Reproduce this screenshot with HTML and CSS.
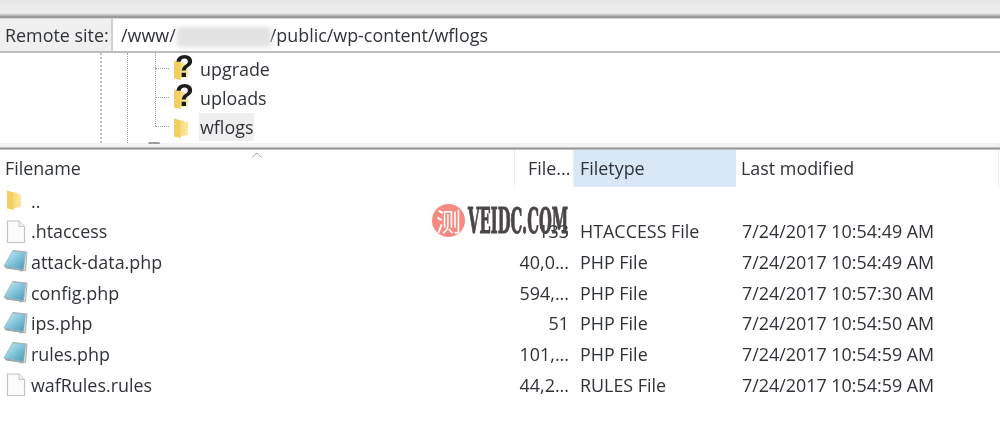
FILE: index.html
```html
<!DOCTYPE html>
<html lang="en">
<head>
<meta charset="utf-8">
<title>Remote site</title>
<link rel="stylesheet" href="styles.css">
</head>
<body>
<svg class="defs" width="0" height="0" aria-hidden="true">
  <defs>
    <linearGradient id="fold" x1="0" y1="0" x2="1" y2="0"><stop offset="0" stop-color="#f7d877"/><stop offset="1" stop-color="#fdea9f"/></linearGradient>
    <linearGradient id="php" x1="0" y1="0" x2="1" y2="1"><stop offset="0" stop-color="#d8eef4"/><stop offset=".5" stop-color="#84c6da"/><stop offset="1" stop-color="#4396b4"/></linearGradient>
    <symbol id="folder" viewBox="0 0 16 22">
      <path d="M1 1.5 8 3.5V21L1 19.5Z" fill="#f3cf63"/>
      <path d="M7 3.5H11V5H15V18L8 19V21L7 20.5Z" fill="url(#fold)"/>
    </symbol>
    <symbol id="file" viewBox="0 0 20 24">
      <path d="M1.5 1H13L18.5 6.5V22.5H1.5Z" fill="#fbfbfb" stroke="#c2c2c2" stroke-width="1.2"/>
      <path d="M13 1V6.5H18.5" fill="#eeeeee" stroke="#c8c8c8" stroke-width="1"/>
    </symbol>
    <symbol id="phpfile" viewBox="0 0 26 24">
      <path d="M10 1.5 24 3 22.5 21.5 17 22Z" fill="#e2e2e2" stroke="#b0b0b0" stroke-width="1"/>
      <path d="M9.5 2 22.5 3.5 20.5 20.5 1 17Z" fill="url(#php)" stroke="#86b2c2" stroke-width=".7"/>
      <path d="M1 17 20.5 20.5 20.3 22 3 19.5Z" fill="#98a8af"/>
    </symbol>
  </defs>
</svg>

<div class="window">
  <div class="topband"></div>

  <div class="address">
    <label class="address-label">Remote site:</label>
    <div class="address-input">/www/<span class="redacted"></span>/public/wp-content/wflogs</div>
  </div>

  <div class="tree">
    <i class="guide guide-a"></i>
    <i class="guide guide-b"></i>
    <i class="guide guide-c"></i>
    <div class="tree-row">
      <i class="branch"></i>
      <span class="tree-icon"><svg class="icon-folder"><use href="#folder"/></svg><b class="unknown">?</b></span>
      <span class="tree-name">upgrade</span>
    </div>
    <div class="tree-row">
      <i class="branch"></i>
      <span class="tree-icon"><svg class="icon-folder"><use href="#folder"/></svg><b class="unknown">?</b></span>
      <span class="tree-name">uploads</span>
    </div>
    <div class="tree-row">
      <i class="branch"></i>
      <span class="tree-icon"><svg class="icon-folder"><use href="#folder"/></svg></span>
      <span class="tree-name selected">wflogs</span>
    </div>
    <i class="next-stub"></i>
  </div>

  <div class="splitter"></div>

  <div class="list">
    <div class="row header">
      <div class="cell name">Filename<svg class="sort" width="12" height="6" viewBox="0 0 12 6"><path d="M1 5.5 6 1l5 4.5" fill="none" stroke="#a8a8a8"/></svg></div>
      <div class="cell size">File...</div>
      <div class="cell type hot">Filetype</div>
      <div class="cell date">Last modified</div>
    </div>
    <div class="row">
      <div class="cell name"><svg class="icon-list-folder"><use href="#folder"/></svg><span class="label">..</span></div>
      <div class="cell size"></div><div class="cell type"></div><div class="cell date"></div>
    </div>
    <div class="row">
      <div class="cell name"><svg class="icon-file"><use href="#file"/></svg><span class="label">.htaccess</span></div>
      <div class="cell size">133</div><div class="cell type">HTACCESS File</div><div class="cell date">7/24/2017 10:54:49 AM</div>
    </div>
    <div class="row">
      <div class="cell name"><svg class="icon-php"><use href="#phpfile"/></svg><span class="label">attack-data.php</span></div>
      <div class="cell size">40,0...</div><div class="cell type">PHP File</div><div class="cell date">7/24/2017 10:54:49 AM</div>
    </div>
    <div class="row">
      <div class="cell name"><svg class="icon-php"><use href="#phpfile"/></svg><span class="label">config.php</span></div>
      <div class="cell size">594,...</div><div class="cell type">PHP File</div><div class="cell date">7/24/2017 10:57:30 AM</div>
    </div>
    <div class="row">
      <div class="cell name"><svg class="icon-php"><use href="#phpfile"/></svg><span class="label">ips.php</span></div>
      <div class="cell size">51</div><div class="cell type">PHP File</div><div class="cell date">7/24/2017 10:54:50 AM</div>
    </div>
    <div class="row">
      <div class="cell name"><svg class="icon-php"><use href="#phpfile"/></svg><span class="label">rules.php</span></div>
      <div class="cell size">101,...</div><div class="cell type">PHP File</div><div class="cell date">7/24/2017 10:54:59 AM</div>
    </div>
    <div class="row">
      <div class="cell name"><svg class="icon-file"><use href="#file"/></svg><span class="label">wafRules.rules</span></div>
      <div class="cell size">44,2...</div><div class="cell type">RULES File</div><div class="cell date">7/24/2017 10:54:59 AM</div>
    </div>
  </div>

  <div class="watermark">
    <span class="wm-badge">测</span>
    <span class="wm-text">VEIDC.COM</span>
  </div>
</div>
</body>
</html>
```

FILE: styles.css
```css
* { box-sizing: border-box; }

html, body {
  margin: 0;
  padding: 0;
  background: #fff;
}

.defs { position: absolute; }

.window {
  position: relative;
  width: 1000px;
  height: 441px;
  overflow: hidden;
  background: #fff;
  color: #2f3237;
  font-family: "Open Sans", "Noto Sans", sans-serif;
  font-size: 17.9px;
  filter: blur(0.35px);
}

.topband {
  height: 19px;
  background: linear-gradient(#e6e6e6 0, #efefef 13px, #d8d8d8 14px, #8f8f8f 17px, #a8a8a8 18px, #fff 19px);
}

.address {
  display: flex;
  height: 34px;
  border-bottom: 2px solid #bcbcbc;
}

.address-label {
  width: 113px;
  padding-left: 5px;
  line-height: 33px;
  background: #f0f0f0;
  border-right: 2px solid #d0d0d0;
  white-space: nowrap;
}

.address-input {
  flex: 1;
  padding-left: 8px;
  line-height: 33px;
  background: #fff;
  white-space: nowrap;
}

.redacted {
  display: inline-block;
  width: 94px;
  height: 20px;
  margin: 0 -1px 0 1px;
  vertical-align: -5px;
  background: #e2e2e2;
  filter: blur(2px);
}

.tree {
  position: relative;
  height: 90px;
  padding: 1px 0 0 172px;
}

.guide {
  position: absolute;
  top: 0;
  width: 0;
  border-left: 1px dotted #9f9f9f;
}
.guide-a { left: 100px; height: 90px; border-left-width: 2px; border-left-color: #c4c4c4; }
.guide-b { left: 127px; height: 90px; }
.guide-c { left: 155px; height: 73px; }

.next-stub {
  position: absolute;
  left: 148px;
  top: 89px;
  width: 12px;
  height: 2px;
  border-radius: 2px 2px 0 0;
  background: #9a9a9a;
}

.tree-row {
  position: relative;
  display: flex;
  align-items: center;
  gap: 7px;
  height: 29px;
}

.branch {
  position: absolute;
  left: -17px;
  top: 14px;
  width: 14px;
  border-top: 1px dotted #9f9f9f;
}

.tree-icon {
  position: relative;
  display: block;
  width: 20px;
  height: 24px;
}

.icon-folder {
  position: absolute;
  left: 1px;
  top: 2px;
  width: 16px;
  height: 22px;
}

.unknown {
  position: absolute;
  left: 3px;
  top: -7px;
  color: #1c1c1c;
  font-family: "Liberation Sans", sans-serif;
  font-size: 31px;
  font-weight: 700;
  line-height: 34px;
}

.tree-name {
  padding: 0 1px;
  line-height: 28px;
}

.selected {
  background: #efefef;
}

.splitter {
  height: 7px;
  background: linear-gradient(#f3f3f3 0, #f3f3f3 4px, #8e8e8e 5px, #9b9b9b 6px, #e4e4e4 7px);
}

.list {
  display: flex;
  flex-direction: column;
}

.row {
  display: grid;
  grid-template-columns: 515px 59px 162px 264px;
  height: 30.7px;
  line-height: 30.7px;
  white-space: nowrap;
}

.row.header {
  height: 34px;
  margin-bottom: 1.6px;
  line-height: 37px;
}

.cell {
  position: relative;
  min-width: 0;
  padding-left: 6px;
}

.name {
  padding-left: 31px;
}

.header .name { padding-left: 5px; }
.header .cell { border-right: 1px solid #ededed; }
.header .size { padding-left: 13px; }
.header .type { padding-left: 6px; border-right: 0; }
.header .date { width: 263px; padding-left: 5px; }

.size {
  padding: 0 5px 0 0;
  text-align: right;
}

.hot { background: #d8e8f6; }

.sort {
  position: absolute;
  left: 251px;
  top: 2px;
}

.icon-list-folder,
.icon-file,
.icon-php {
  position: absolute;
  top: 50%;
}

.icon-list-folder { left: 6px; width: 16px; height: 22px; margin-top: -12px; }
.icon-file { left: 6px; width: 20px; height: 24px; margin-top: -12px; }
.icon-php { left: 3px; width: 26px; height: 24px; margin-top: -13px; }

.watermark {
  position: absolute;
  left: 432px;
  top: 204px;
  display: flex;
  align-items: center;
  gap: 3px;
}

.wm-badge {
  display: block;
  width: 33px;
  height: 33px;
  border-radius: 50%;
  background: #f58a80;
  color: #fff;
  font-family: "Noto Sans CJK SC", sans-serif;
  font-size: 25px;
  line-height: 32px;
  text-align: center;
}

.wm-text {
  display: block;
  width: 101px;
  color: #4a4647;
  font-family: "DejaVu Serif Condensed", "DejaVu Serif", serif;
  font-size: 35px;
  font-weight: 700;
  line-height: 33px;
  white-space: nowrap;
  -webkit-text-stroke: 1px #4a4647;
  transform: scaleX(.47);
  transform-origin: left center;
}
```
